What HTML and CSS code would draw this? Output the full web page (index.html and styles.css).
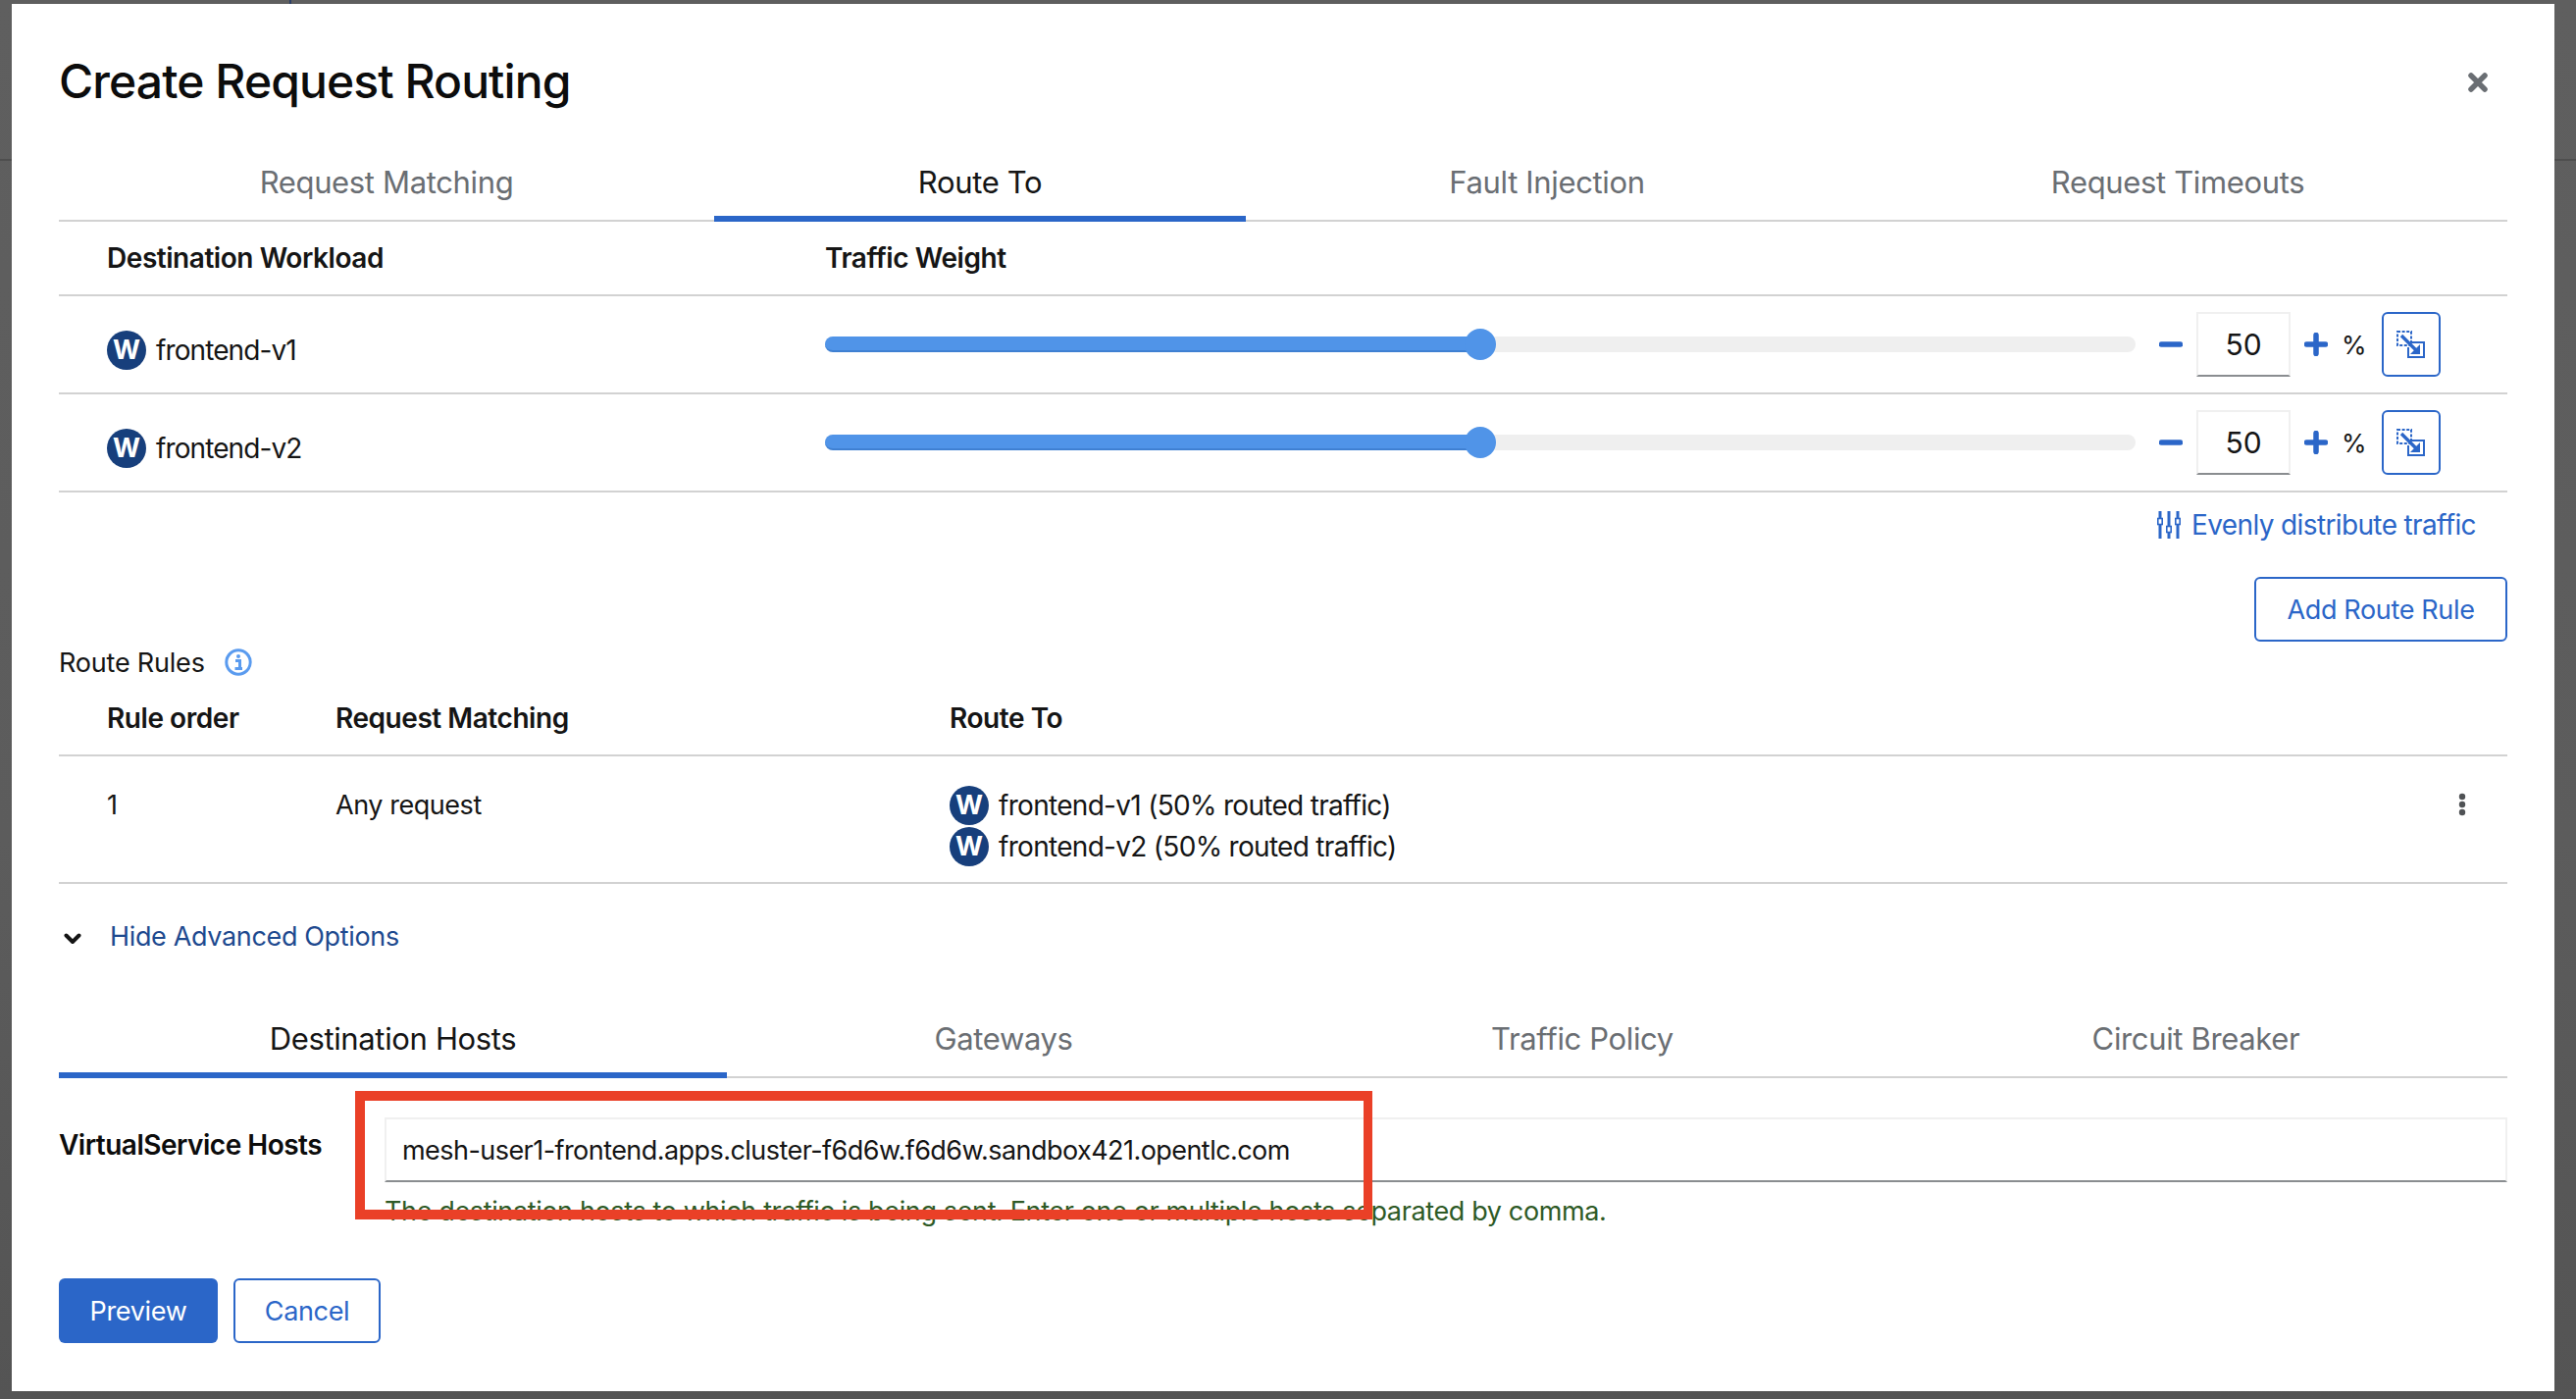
FILE: index.html
```html
<!DOCTYPE html>
<html lang="en">
<head>
<meta charset="utf-8">
<title>Create Request Routing</title>
<link rel="stylesheet" href="styles.css">
</head>
<body>
<span class="bg-tick"></span>
<div class="modal">
  <header class="modal-head">
    <h1 class="title">Create Request Routing</h1>
    <svg class="close" viewBox="0 0 20 20" width="20" height="20"><path d="M3 3L17 17M17 3L3 17" stroke="#6a6e73" stroke-width="5.5" stroke-linecap="round"/></svg>
  </header>

  <nav class="tabs tabs-top">
    <div class="tab">Request Matching</div>
    <div class="tab tab-active">Route To</div>
    <div class="tab">Fault Injection</div>
    <div class="tab">Request Timeouts</div>
  </nav>

  <div class="wl-row wl-head">
    <div class="wl-name th th-dest">Destination Workload</div>
    <div class="th">Traffic Weight</div>
  </div>

  <div class="wl-row wl-body">
    <div class="wl-name"><span class="badge">W</span><span class="wl-text">frontend-v1</span></div>
    <div class="wl-controls">
      <div class="slider"><div class="slider-fill" style="width:50%"></div><div class="slider-thumb" style="left:50%"></div></div>
      <svg class="pm" viewBox="0 0 24 24" width="24" height="24"><path d="M2.5 12H21.5" stroke="#2b66c8" stroke-width="5.5" stroke-linecap="round"/></svg>
      <div class="num">50</div>
      <svg class="pm" viewBox="0 0 24 24" width="24" height="24"><path d="M2.5 12H21.5M12 2.5V21.5" stroke="#2b66c8" stroke-width="5.5" stroke-linecap="round"/></svg>
      <span class="pct">%</span>
      <div class="mirror"><svg viewBox="0 0 30 28" width="30" height="28"><rect x="1" y="1" width="14" height="14" fill="none" stroke="#2b66c8" stroke-width="2" stroke-dasharray="3 1.6"/><path d="M16 12H28V27H12V17" fill="none" stroke="#2b66c8" stroke-width="2"/><path d="M5 5L20 20" stroke="#2b66c8" stroke-width="3.4"/><path d="M24 24H14L24 14Z" fill="#2b66c8"/></svg></div>
    </div>
  </div>

  <div class="wl-row wl-body">
    <div class="wl-name"><span class="badge">W</span><span class="wl-text">frontend-v2</span></div>
    <div class="wl-controls">
      <div class="slider"><div class="slider-fill" style="width:50%"></div><div class="slider-thumb" style="left:50%"></div></div>
      <svg class="pm" viewBox="0 0 24 24" width="24" height="24"><path d="M2.5 12H21.5" stroke="#2b66c8" stroke-width="5.5" stroke-linecap="round"/></svg>
      <div class="num">50</div>
      <svg class="pm" viewBox="0 0 24 24" width="24" height="24"><path d="M2.5 12H21.5M12 2.5V21.5" stroke="#2b66c8" stroke-width="5.5" stroke-linecap="round"/></svg>
      <span class="pct">%</span>
      <div class="mirror"><svg viewBox="0 0 30 28" width="30" height="28"><rect x="1" y="1" width="14" height="14" fill="none" stroke="#2b66c8" stroke-width="2" stroke-dasharray="3 1.6"/><path d="M16 12H28V27H12V17" fill="none" stroke="#2b66c8" stroke-width="2"/><path d="M5 5L20 20" stroke="#2b66c8" stroke-width="3.4"/><path d="M24 24H14L24 14Z" fill="#2b66c8"/></svg></div>
    </div>
  </div>

  <div class="even-row">
    <svg class="even-icon" viewBox="0 0 24 28" width="24" height="28"><path d="M3 0V28M12 0V28M21 0V28" stroke="#2b66c8" stroke-width="3"/><rect x="0.8" y="7.5" width="4.4" height="6" fill="#fff" stroke="#2b66c8" stroke-width="1.6"/><rect x="9.8" y="15.5" width="4.4" height="6" fill="#fff" stroke="#2b66c8" stroke-width="1.6"/><rect x="18.8" y="7.5" width="4.4" height="6" fill="#fff" stroke="#2b66c8" stroke-width="1.6"/></svg>
    <span class="even-text">Evenly distribute traffic</span>
  </div>

  <div class="add-row"><div class="btn btn-add">Add Route Rule</div></div>

  <div class="rules-label">
    <span class="rules-text">Route Rules</span>
    <svg class="info" viewBox="0 0 28 28" width="28" height="28"><circle cx="14" cy="14" r="12.2" fill="none" stroke="#5a9bef" stroke-width="3"/><path d="M11 12.5H15.5V20M10.5 20.5H18" fill="none" stroke="#5a9bef" stroke-width="3"/><circle cx="14" cy="8" r="2" fill="#5a9bef"/></svg>
  </div>

  <div class="rule-row rule-head">
    <div class="th">Rule order</div>
    <div class="th">Request Matching</div>
    <div class="th">Route To</div>
  </div>

  <div class="rule-row rule-body">
    <div class="cell">1</div>
    <div class="cell">Any request</div>
    <div class="route-list">
      <div class="route-item"><span class="badge">W</span><span class="route-text">frontend-v1 (50% routed traffic)</span></div>
      <div class="route-item"><span class="badge">W</span><span class="route-text">frontend-v2 (50% routed traffic)</span></div>
    </div>
    <svg class="kebab" viewBox="0 0 8 24" width="8" height="24"><circle cx="4" cy="4" r="3.2" fill="#4f5255"/><circle cx="4" cy="12" r="3.2" fill="#4f5255"/><circle cx="4" cy="20" r="3.2" fill="#4f5255"/></svg>
  </div>

  <div class="advanced">
    <svg class="chev" viewBox="0 0 18 12" width="18" height="12"><path d="M2.5 2.5L9 9L15.5 2.5" fill="none" stroke="#151515" stroke-width="4" stroke-linecap="round" stroke-linejoin="round"/></svg>
    <span class="advanced-text">Hide Advanced Options</span>
  </div>

  <nav class="tabs tabs-bottom">
    <div class="tab tab-active">Destination Hosts</div>
    <div class="tab">Gateways</div>
    <div class="tab">Traffic Policy</div>
    <div class="tab">Circuit Breaker</div>
  </nav>

  <div class="form">
    <label class="form-label">VirtualService Hosts</label>
    <div class="form-field">
      <div class="input">mesh-user1-frontend.apps.cluster-f6d6w.f6d6w.sandbox421.opentlc.com</div>
      <div class="helper">The destination hosts to which traffic is being sent. Enter one or multiple hosts separated by comma.</div>
    </div>
    <div class="highlight"></div>
  </div>

  <div class="actions">
    <div class="btn btn-primary">Preview</div>
    <div class="btn btn-cancel">Cancel</div>
  </div>
</div>
</body>
</html>
```

FILE: styles.css
```css
* { box-sizing: border-box; }
html, body { height: 100%; }
body {
  margin: 0;
  padding: 4px 22px 8px 12px;
  overflow: hidden;
  position: relative;
  font-family: "Inter", "Liberation Sans", sans-serif;
  color: #151515;
  background:
    linear-gradient(#4e4e4e, #4e4e4e) 0 162px / 100% 2px no-repeat,
    linear-gradient(#5f5f5f, #5c5c5c 60%, #545454);
}
.bg-tick { position: absolute; left: 295px; top: 0; width: 2px; height: 4px; background: #2c3f66; }
.modal { height: 1414px; background: #fff; padding: 0 48px; position: relative; }

.modal-head { height: 150px; display: flex; align-items: flex-start; justify-content: space-between; }
.title { margin: 51px 0 0; font-size: 48px; line-height: 56px; font-weight: 500; color: #0c0c0c; letter-spacing: -0.9px; white-space: nowrap; }
.close { margin: 70px 20px 0 0; }

.tabs { display: grid; border-bottom: 2px solid #d2d2d2; }
.tabs-top { grid-template-columns: 668px 542px 614px 672px; height: 72px; }
.tabs-bottom { grid-template-columns: 681px 564px 616px 635px; height: 90px; margin-top: 0; }
.tab { font-size: 31px; line-height: 40px; color: #6a6e73; text-align: center; letter-spacing: -0.35px; margin-bottom: -2px; white-space: nowrap; }
.tabs-top .tab { padding-top: 12px; }
.tabs-bottom .tab { padding-top: 30px; }
.tab-active { color: #151515; border-bottom: 6px solid #2b66c8; }

.th { font-size: 28px; line-height: 36px; font-weight: 600; letter-spacing: -0.45px; white-space: nowrap; }
.wl-row { display: flex; align-items: center; border-bottom: 2px solid #d2d2d2; }
.wl-head { height: 76px; }
.wl-body { height: 100px; }
.wl-name { width: 781px; padding-left: 49px; display: flex; align-items: center; }
.wl-body .wl-name { padding-top: 12px; }
.badge {
  width: 40px; height: 40px; flex: none; border-radius: 50%;
  background: #173f7c; color: #fff;
  font-size: 27px; line-height: 40px; font-weight: 700; text-align: center;
}
.wl-text { margin: 0 0 0 10px; font-size: 28px; line-height: 36px; letter-spacing: -0.9px; color: #151515; }
.wl-controls { flex: 1; display: flex; align-items: center; padding-right: 68px; }
.slider { flex: 1; height: 16px; margin-right: 24px; border-radius: 8px; background: #efefef; position: relative; }
.slider-fill { height: 16px; border-radius: 8px; background: #5094e8; border-bottom: 2px solid #3f80d2; }
.slider-thumb { position: absolute; top: -8px; width: 32px; height: 32px; margin-left: -16px; border-radius: 50%; background: #5094e8; }
.pm { flex: none; }
.num {
  width: 96px; height: 66px; margin: 0 14px;
  border: 2px solid #f0f0f0; border-bottom-color: #8a8d90;
  font-size: 30px; line-height: 62px; text-align: center;
}
.pct { width: 24px; margin: 0 17px 0 14px; font-size: 26px; text-align: left; }
.mirror { width: 60px; height: 66px; flex: none; border: 2px solid #2b66c8; border-radius: 6px; display: flex; align-items: center; justify-content: center; }

.even-row { height: 66px; margin-bottom: 2px; padding: 0 32px 0 0; display: flex; align-items: center; justify-content: flex-end; }
.even-icon { flex: none; margin-right: 11px; }
.even-text { font-size: 28px; line-height: 36px; letter-spacing: -0.63px; color: #2b66c8; white-space: nowrap; }

.add-row { display: flex; justify-content: flex-end; padding-top: 18px; }
.btn { height: 66px; display: flex; align-items: center; justify-content: center; border-radius: 6px; font-size: 27px; letter-spacing: -0.35px; white-space: nowrap; }
.btn-add { width: 258px; border: 2px solid #2b66c8; color: #2b66c8; }

.rules-label { height: 40px; margin-top: 1px; display: flex; align-items: center; }
.rules-text { font-size: 27px; letter-spacing: -0.2px; }
.info { margin-left: 20px; }

.rule-row { display: grid; grid-template-columns: 233px 626px 1fr; padding-left: 49px; border-bottom: 2px solid #d2d2d2; position: relative; }
.rule-head { height: 76px; align-items: center; }
.rule-body { height: 130px; padding-top: 32px; }
.cell { font-size: 27px; line-height: 36px; letter-spacing: -0.45px; }
.route-list { display: flex; flex-direction: column; gap: 2px; margin-top: -2px; }
.route-item { display: flex; align-items: center; height: 40px; }
.route-text { margin-left: 10px; font-size: 28px; letter-spacing: -0.7px; white-space: nowrap; }
.kebab { position: absolute; left: 2446px; top: 37px; }

.advanced { height: 108px; padding: 48px 0 0 5px; display: flex; align-items: flex-start; }
.chev { flex: none; margin-top: 2px; }
.advanced-text { margin: -12px 0 0 29px; font-size: 27px; line-height: 36px; letter-spacing: -0.35px; color: #1e4a8f; }

.form { display: flex; margin-top: 40px; position: relative; }
.form-label { width: 332px; padding-top: 10px; font-size: 28px; line-height: 36px; font-weight: 600; letter-spacing: -0.5px; color: #0c0c0c; white-space: nowrap; }
.form-field { flex: 1; }
.input { height: 66px; padding-left: 16px; border-top: 2px solid #f0f0f0; border-left: 2px solid #f0f0f0; border-right: 2px solid #f0f0f0; border-bottom: 2px solid #8a8d90; font-size: 27px; line-height: 64px; letter-spacing: -0.55px; white-space: nowrap; }
.helper { margin-top: 13px; font-size: 27px; line-height: 34px; letter-spacing: -0.37px; color: #2e5a26; white-space: nowrap; }
.highlight { position: absolute; left: 302px; top: -27px; width: 1037px; height: 131px; border: 10px solid #ea4027; border-right-width: 9px; }

.actions { display: flex; gap: 16px; margin-top: 51px; }
.btn-primary { width: 162px; background: #2b66c8; color: #fff; }
.btn-cancel { width: 150px; border: 2px solid #2b66c8; color: #2b66c8; }
```
